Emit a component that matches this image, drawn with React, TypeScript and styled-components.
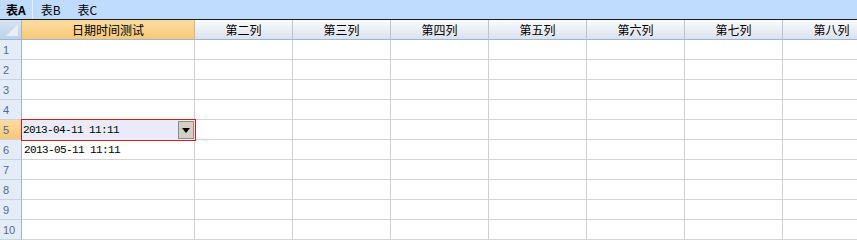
import React from "react";
import styled, { createGlobalStyle } from "styled-components";

const Global = createGlobalStyle`
  html, body { margin: 0; padding: 0; background: #ffffff; }
  body { font-family: "Noto Sans CJK SC", "Liberation Sans", sans-serif; font-size: 12px; }
`;

const Page = styled.div`
  width: 857px;
  height: 240px;
  overflow: hidden;
  background: #fff;
`;

const TabBar = styled.div`
  display: flex;
  height: 19px;
  background: #bfdbfd;
  border-bottom: 1px solid #1c1c1c;
  padding-left: 3px;
`;

const Tab = styled.div<{ $active?: boolean }>`
  display: flex;
  align-items: center;
  padding: 0 6px 0 3px;
  height: 19px;
  font-size: 12px;
  line-height: 19px;
  color: #000;
  font-weight: ${(p) => (p.$active ? 700 : 400)};
  border-right: ${(p) => (p.$active ? "1px solid #e6f0fc" : "none")};
  margin-right: ${(p) => (p.$active ? "5px" : "8px")};
`;

const Grid = styled.div`
  display: grid;
  grid-template-columns: 22px 173px repeat(7, 98px);
  grid-auto-rows: 20px;
  width: 880px;
`;

const Corner = styled.div`
  position: relative;
  background: linear-gradient(#d6e3f3, #bfd1ea);
  border-right: 1px solid #9eb6ce;
  border-bottom: 1px solid #9eb6ce;
  box-sizing: border-box;
`;

const CornerTri = styled.div`
  position: absolute;
  right: 3px;
  bottom: 3px;
  width: 0;
  height: 0;
  border-left: 12px solid transparent;
  border-bottom: 12px solid #e6eef9;
`;

const ColHead = styled.div<{ $active?: boolean }>`
  box-sizing: border-box;
  display: flex;
  align-items: center;
  justify-content: center;
  font-size: 12px;
  color: #000;
  background: ${(p) =>
    p.$active
      ? "linear-gradient(#fbdca0, #f8c878)"
      : "linear-gradient(#fafcfe, #dbe2ee)"};
  border-right: 1px solid ${(p) => (p.$active ? "#e6b45e" : "#b9c3d2")};
  border-bottom: 1px solid #9eb6ce;
`;

const RowHead = styled.div<{ $active?: boolean }>`
  box-sizing: border-box;
  display: flex;
  align-items: center;
  padding-left: 3px;
  font-family: "Liberation Sans", sans-serif;
  font-size: 11px;
  color: #4f6b95;
  background: ${(p) => (p.$active ? "linear-gradient(#fbdca0, #f8c878)" : "#e4ecf7")};
  border-right: 1px solid #9eb6ce;
  border-bottom: 1px solid #c7d3e3;
`;

const Cell = styled.div`
  box-sizing: border-box;
  display: flex;
  align-items: center;
  padding-left: 2px;
  font-family: "Liberation Mono", monospace;
  font-size: 11px;
  letter-spacing: -0.6px;
  color: #000;
  border-right: 1px solid #d0d0d0;
  border-bottom: 1px solid #d4d4d4;
  white-space: nowrap;
`;

const EditCell = styled.div`
  position: relative;
  z-index: 2;
  box-sizing: border-box;
  display: flex;
  align-items: center;
  justify-content: space-between;
  padding: 0 1px 0 1px;
  font-family: "Liberation Mono", monospace;
  font-size: 11px;
  letter-spacing: -0.6px;
  color: #000;
  background: #e9ecf8;
  outline: 1px solid #d21b1b;
  box-shadow: 0 0 0 1px #d21b1b;
  white-space: nowrap;
`;

const DropBtn = styled.div`
  width: 16px;
  height: 18px;
  box-sizing: border-box;
  background: #d2cfc7;
  border: 1px solid #8f8d88;
  display: flex;
  align-items: center;
  justify-content: center;
`;

const Arrow = styled.div`
  width: 0;
  height: 0;
  border-left: 4px solid transparent;
  border-right: 4px solid transparent;
  border-top: 5px solid #000;
`;

const columns = ["日期时间测试", "第二列", "第三列", "第四列", "第五列", "第六列", "第七列", "第八列"];
const data: Record<number, string> = { 6: "2013-05-11 11:11" };

export default function App() {
  const rows = Array.from({ length: 10 }, (_, i) => i + 1);
  return (
    <Page>
      <Global />
      <TabBar>
        <Tab $active>表A</Tab>
        <Tab>表B</Tab>
        <Tab>表C</Tab>
      </TabBar>
      <Grid>
        <Corner>
          <CornerTri />
        </Corner>
        {columns.map((c, i) => (
          <ColHead key={c} $active={i === 0}>
            {c}
          </ColHead>
        ))}
        {rows.map((r) => (
          <React.Fragment key={r}>
            <RowHead $active={r === 5}>{r}</RowHead>
            {columns.map((c, ci) =>
              r === 5 && ci === 0 ? (
                <EditCell key={c}>
                  <span>2013-04-11 11:11</span>
                  <DropBtn>
                    <Arrow />
                  </DropBtn>
                </EditCell>
              ) : (
                <Cell key={c}>{ci === 0 ? data[r] ?? "" : ""}</Cell>
              )
            )}
          </React.Fragment>
        ))}
      </Grid>
    </Page>
  );
}
